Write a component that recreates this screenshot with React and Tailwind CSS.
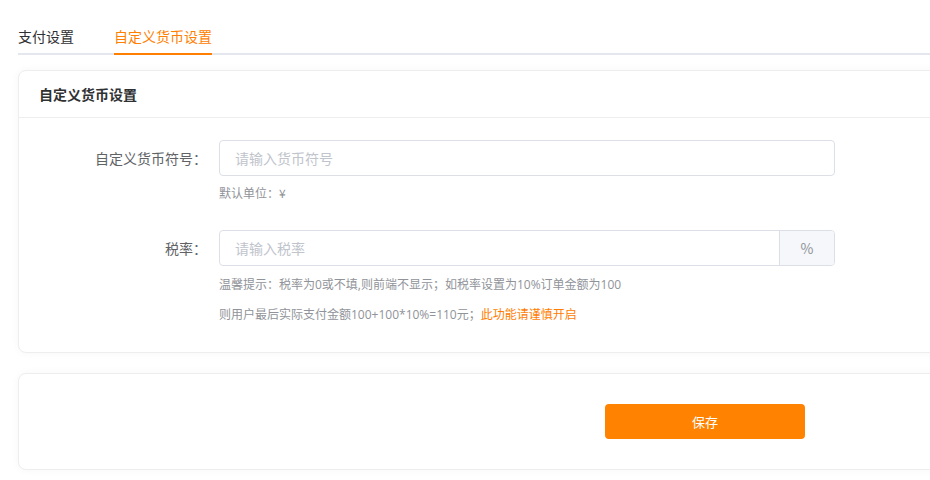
import React, { useState } from 'react'

// CurrencySettings
// - tab bar (支付设置 / 自定义货币设置) and the custom currency form
export default function App() {
    const [tab, setTab] = useState('currency')
    const [symbol, setSymbol] = useState('')
    const [rate, setRate] = useState('')

    const tabs = [
        { id: 'pay', label: '支付设置' },
        { id: 'currency', label: '自定义货币设置' },
    ]

    return (
        <div className="w-full overflow-hidden bg-white" style={{ fontFamily: '"Noto Sans CJK SC", "Noto Sans", sans-serif' }}>
            <div className="w-[1392px] pl-[18px] pb-[10px]">
                {/* tabs */}
                <div className="flex gap-[40px] border-b-2 border-[#e4e7ed]">
                    {tabs.map((t) => (
                        <button
                            key={t.id}
                            onClick={() => setTab(t.id)}
                            className={`-mb-[2px] pt-[25px] pb-[6px] text-[14px] leading-[22px] border-b-2 ${
                                tab === t.id ? 'text-[#ff8000] border-[#ff8000]' : 'text-[#303133] border-transparent'
                            }`}
                        >
                            {t.label}
                        </button>
                    ))}
                </div>

                {/* form card */}
                <div className="mt-[15px] rounded-[8px] border border-[#eeeeee] bg-white shadow-[0_0_8px_rgba(0,0,0,0.04)]">
                    <div className="h-[47px] flex items-center px-[20px] border-b border-[#eeeeee]">
                        <h3 className="text-[14px] font-bold text-[#303133]">自定义货币设置</h3>
                    </div>

                    <div className="pt-[22px] pb-[22px]">
                        <div className="flex">
                            <label className="w-[200px] shrink-0 pr-[12px] text-right text-[14px] leading-[36px] text-[#606266]">自定义货币符号：</label>
                            <div className="w-[616px]">
                                <input
                                    value={symbol}
                                    onChange={(e) => setSymbol(e.target.value)}
                                    placeholder="请输入货币符号"
                                    className="w-full h-[36px] px-[15px] text-[14px] text-[#606266] border border-[#dcdfe6] rounded-[4px] outline-none placeholder:text-[#c0c4cc]"
                                />
                                <div className="mt-[8px] text-[12px] leading-[18px] text-[#909399]">默认单位：¥</div>
                            </div>
                        </div>

                        <div className="flex mt-[28px]">
                            <label className="w-[200px] shrink-0 pr-[12px] text-right text-[14px] leading-[36px] text-[#606266]">税率：</label>
                            <div className="w-[616px]">
                                <div className="flex h-[36px] border border-[#dcdfe6] rounded-[4px] overflow-hidden">
                                    <input
                                        value={rate}
                                        onChange={(e) => setRate(e.target.value)}
                                        placeholder="请输入税率"
                                        className="flex-1 min-w-0 px-[15px] text-[14px] text-[#606266] outline-none placeholder:text-[#c0c4cc]"
                                    />
                                    <div className="w-[55px] flex items-center justify-center border-l border-[#dcdfe6] bg-[#f5f7fa] text-[14px] text-[#909399]">%</div>
                                </div>
                                <div
                                    className="mt-[4px] text-[12px] leading-[30px] text-[#909399]"
                                    style={{ fontFamily: '"Open Sans", "Noto Sans CJK SC", sans-serif' }}
                                >
                                    <div>温馨提示：税率为0或不填,则前端不显示；如税率设置为10%订单金额为100</div>
                                    <div>
                                        则用户最后实际支付金额100+100*10%=110元；<span className="text-[#ff7d00]">此功能请谨慎开启</span>
                                    </div>
                                </div>
                            </div>
                        </div>
                    </div>
                </div>

                {/* actions card */}
                <div className="mt-[20px] rounded-[8px] border border-[#eeeeee] bg-white shadow-[0_0_8px_rgba(0,0,0,0.04)] py-[30px] flex justify-center">
                    <button className="w-[200px] h-[35px] rounded-[4px] bg-[#ff8200] text-white text-[13px] hover:bg-[#ff9420]">保存</button>
                </div>
            </div>
        </div>
    )
}
